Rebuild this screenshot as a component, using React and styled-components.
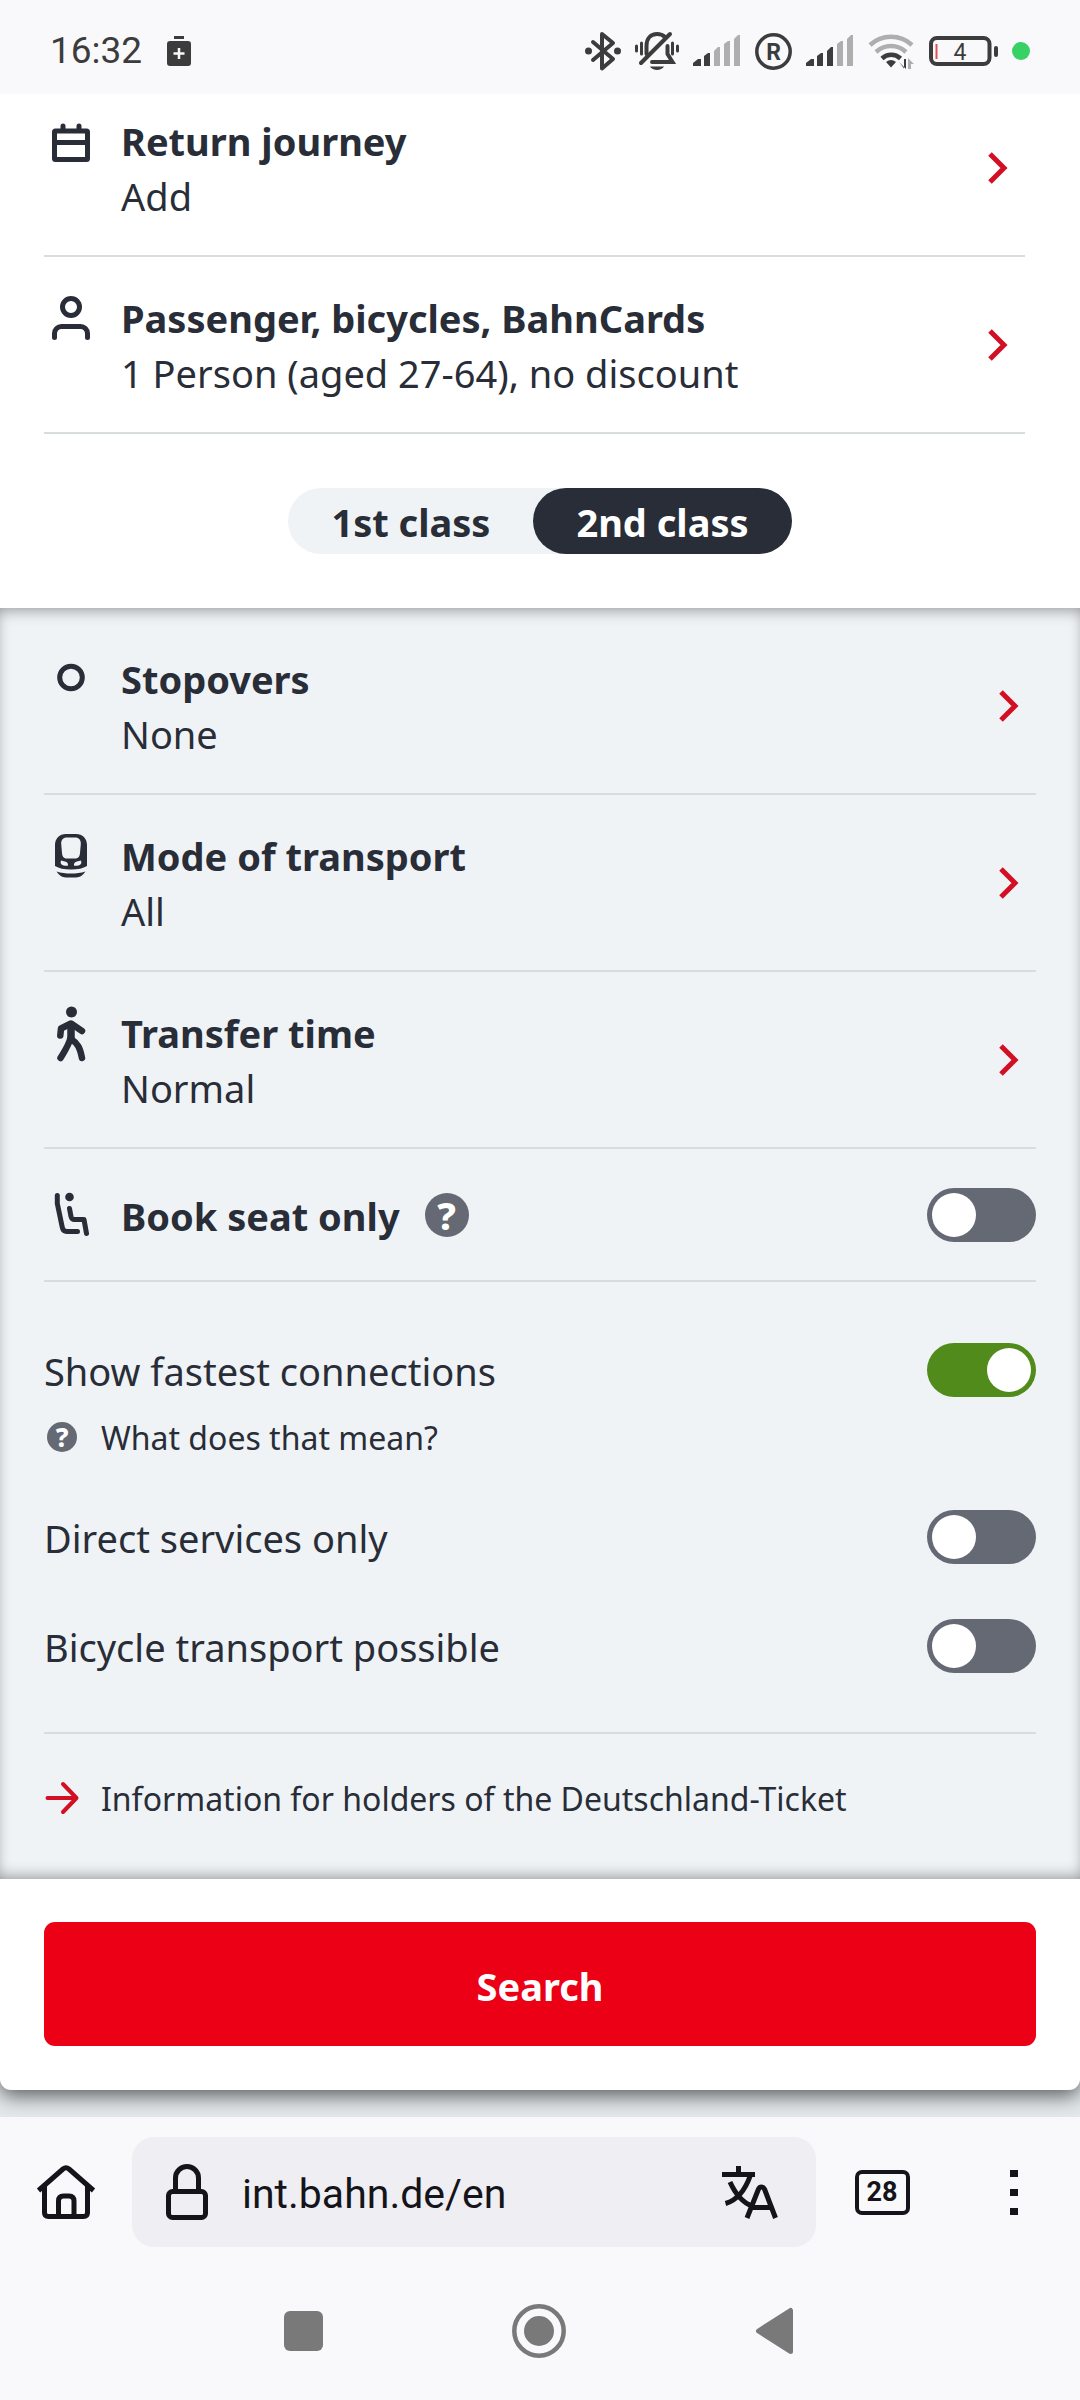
import React, { useState } from "react"
import styled, { createGlobalStyle } from "styled-components"

const GlobalStyle = createGlobalStyle`
    *, *::before, *::after {
        box-sizing: border-box;
    }

    body {
        margin: 0;
        background: #f9f9fb;
        color: #282d37;
        font-family: "Noto Sans", "Open Sans", sans-serif;
        font-size: 38px;
        line-height: 55px;
    }

    button, input {
        font: inherit;
        color: inherit;
    }

    svg {
        display: block;
        flex: none;
        overflow: visible;
    }
`;

// Phone status bar, stays above the shadow of the form card
const StatusBar = styled.header`
    position: relative;
    z-index: 1;
    display: flex;
    align-items: center;
    justify-content: space-between;
    height: 94px;
    padding: 8px 50px 0 50px;
    background: #f9f9fb;
    color: #3c3c3c;
    font-family: Roboto, sans-serif;
    font-size: 37px;
    line-height: 44px;
`;

const StatusGroup = styled.div`
    display: flex;
    align-items: center;
    gap: ${props => props.$gap}px;
`;

// Search form
const Page = styled.main`
    background: #e3e8ea;
    padding-bottom: 27px;
`;

const Form = styled.form`
    background: #fff;
    border-radius: 0 0 11px 11px;
    box-shadow: 0 6px 20px rgba(0, 0, 0, 0.6);
`;

const TopSection = styled.section`
    padding: 0 55px 0 44px;
`;

const OptionsPanel = styled.section`
    padding: 10px 44px 58px;
    background: #eff3f6;
    box-shadow:
        inset 0 12px 16px -10px rgba(0, 0, 0, 0.3),
        inset 0 -12px 16px -10px rgba(0, 0, 0, 0.3),
        inset 0 0 14px rgba(0, 0, 0, 0.12);
`;

const LinkRow = styled.button`
    display: flex;
    align-items: flex-start;
    gap: 23px;
    width: 100%;
    padding: ${props => props.$clipped ? 18 : 32}px 17px 31px 0;
    border: 0;
    border-bottom: 2px solid #d7dcdf;
    background: none;
    text-align: left;
    cursor: pointer;
`;

const RowText = styled.span`
    display: flex;
    flex: 1;
    flex-direction: column;
    padding-top: 2px;
`;

const Title = styled.span`
    font-weight: 700;
`;

const ChevronSlot = styled.span`
    display: flex;
    align-items: center;
    align-self: stretch;
`;

const SeatRow = styled.div`
    display: flex;
    align-items: center;
    gap: 23px;
    height: 133px;
    border-bottom: 2px solid #d7dcdf;
`;

const SeatLabel = styled.div`
    display: flex;
    flex: 1;
    align-items: center;
    gap: 25px;

    label {
        padding-top: 4px;
    }
`;

const ClassBar = styled.div`
    display: flex;
    justify-content: center;
    padding: 54px 0;
    margin-right: -11px;
`;

const ClassSwitch = styled.fieldset`
    display: flex;
    margin: 0;
    padding: 0;
    border: 0;
    border-radius: 33px;
    background: #eff3f6;
`;

const ClassOption = styled.label`
    padding: 7px 43px 4px;
    border-radius: 33px;
    font-weight: 700;
    cursor: pointer;

    &:has(input:checked) {
        background: #282d37;
        color: #fff;
    }

    input {
        appearance: none;
        position: absolute;
        margin: 0;
        opacity: 0;
    }
`;

const Toggle = styled.input.attrs({ type: 'checkbox', role: 'switch' })`
    appearance: none;
    display: flex;
    align-items: center;
    flex: none;
    width: 109px;
    height: 54px;
    margin: 0;
    padding: 0 5px;
    border-radius: 27px;
    background: #646973;
    cursor: pointer;

    &::before {
        content: "";
        width: 44px;
        height: 44px;
        border-radius: 50%;
        background: #fff;
    }

    &:checked {
        justify-content: flex-end;
        background: #508b1b;
    }
`;

const Options = styled.div`
    padding: 60px 0 59px;
    border-bottom: 2px solid #d7dcdf;
`;

const OptionRow = styled.div`
    display: flex;
    align-items: center;
    justify-content: space-between;
    height: 55px;

    & + & {
        margin-top: 54px;
    }

    label {
        padding-top: 4px;
    }
`;

const HelpButton = styled.button`
    display: flex;
    align-items: center;
    gap: 24px;
    margin: 17px 0 49px;
    padding: 0 0 0 3px;
    border: 0;
    background: none;
    font-size: 32px;
    line-height: 44px;
    cursor: pointer;
`;

const SmallText = styled.span`
    padding-top: 2px;
`;

const HelpBadge = styled.span`
    display: flex;
    align-items: center;
    justify-content: center;
    width: ${props => props.$size}px;
    height: ${props => props.$size}px;
    border-radius: 50%;
    background: #646973;
    color: #fff;
    font-size: ${props => props.$size === 44 ? 38 : 26}px;
    font-weight: 800;
    line-height: 1;
`;

const SeatHelp = styled.button`
    padding: 0;
    border: 0;
    background: none;
    cursor: pointer;
`;

const InfoLink = styled.a`
    display: flex;
    align-items: center;
    gap: 23px;
    margin-top: 41px;
    color: inherit;
    font-size: 32px;
    line-height: 44px;
    text-decoration: none;
`;

const SubmitArea = styled.div`
    padding: 43px 44px 44px;
`;

const SubmitButton = styled.button`
    display: block;
    width: 100%;
    height: 124px;
    padding: 4px 0 0;
    border: 0;
    border-radius: 11px;
    background: #ec0016;
    color: #fff;
    font-weight: 700;
    cursor: pointer;
`;

// Browser toolbar and system navigation
const Toolbar = styled.div`
    display: flex;
    align-items: center;
    padding-top: 20px;
    color: #15141a;
`;

const ToolButton = styled.button`
    display: flex;
    justify-content: center;
    width: 132px;
    padding: 0;
    border: 0;
    background: none;
`;

const AddressBar = styled.div`
    display: flex;
    flex: 1;
    align-items: center;
    gap: 34px;
    min-width: 0;
    height: 110px;
    padding: 0 38px 0 34px;
    border-radius: 22px;
    background: #efeff3;
`;

const AddressInput = styled.input`
    flex: 1;
    min-width: 0;
    padding: 4px 0 0;
    border: 0;
    outline: 0;
    background: none;
    font-family: Roboto, sans-serif;
    font-size: 41px;
`;

const IconButton = styled.button`
    padding: 0;
    border: 0;
    background: none;
`;

const TabCount = styled.span`
    display: flex;
    align-items: center;
    justify-content: center;
    width: 55px;
    height: 45px;
    border: 4px solid #15141a;
    border-radius: 7px;
    font-family: Roboto, sans-serif;
    font-size: 27px;
    font-weight: 700;
    line-height: 30px;
`;

const SystemNav = styled.nav`
    display: grid;
    grid-template-columns: repeat(3, 1fr);
    align-items: center;
    height: 152px;
    padding: 16px 188px 0 186px;
    color: #797979;
`;

const NavButton = styled.button`
    display: flex;
    justify-content: center;
    padding: 0;
    border: 0;
    background: none;
    color: inherit;
`;

const RowIcon = ({ children }) => (
    <svg width="54" height="56" viewBox="0 0 54 56" fill="none" stroke="currentColor" strokeWidth="5" strokeLinecap="round" strokeLinejoin="round" aria-hidden="true">
        {children}
    </svg>
)

const CalendarIcon = () => (
    <RowIcon>
        <rect x="10.5" y="19" width="33" height="28.5" rx="1" />
        <path d="M10.5 30.5h33M19 14v4M35 14v4" />
    </RowIcon>
)

const PersonIcon = () => (
    <RowIcon>
        <circle cx="27" cy="18" r="8.5" />
        <path d="M10.5 48.5v-4a7 7 0 0 1 7-7h19a7 7 0 0 1 7 7v4" />
    </RowIcon>
)

const StopoverIcon = () => (
    <RowIcon>
        <circle cx="27" cy="27.500" r="11.3" />
    </RowIcon>
)

const TrainIcon = () => (
    <RowIcon>
        <g fill="currentColor" stroke="none">
            <path fillRule="evenodd" d="M22 7h10c6.500 0 11 4.500 11 11v21c-4 2.500-9 3.500-16 3.500S15 41.500 11 39V18c0-6.500 4.500-11 11-11zM23 10.500c-4 0-6 2.500-5.800 6.500l.8 9c.3 4 2 5.500 5 5.500h8c3 0 4.700-1.500 5-5.500l.8-9c.2-4-1.800-6.500-5.800-6.500zM17 33.500c-1 2.500 0 4.500 2.500 5 2 .4 4 .5 4.500 0 .3-2.500-1-3.500-3-4zM37 33.500c1 2.500 0 4.500-2.500 5-2 .4-4 .5-4.500 0-.3-2.500 1-3.500 3-4z" />
            <path d="M12.500 44.500c9 2.800 20 2.800 29 0-2 3-5.500 6-9.500 6H22c-4 0-7.500-3-9.500-6z" />
        </g>
    </RowIcon>
)

const WalkIcon = () => (
    <RowIcon>
        <circle cx="27.500" cy="8" r="5.500" fill="currentColor" stroke="none" />
        <path d="M16.300 31.500 17 24.500 27 19.500 38 27" strokeWidth="6.500" />
        <path d="M27 21v14" strokeWidth="7.500" />
        <path d="M26.500 34c-2 8-6.500 14-10 20M27 35c7 4.500 9 9 11 19" strokeWidth="6.500" />
    </RowIcon>
)

const SeatIcon = () => (
    <RowIcon>
        <circle cx="25.500" cy="10" r="4.300" fill="currentColor" stroke="none" />
        <path d="M13.300 8.500v8l5 24q.9 4 4.500 4H33.500M25.500 21.500l1.500 8q.7 3 3.500 3h9.500l2.500 14" />
    </RowIcon>
)

const ChevronIcon = () => (
    <svg width="20" height="32" viewBox="0 0 20 32" fill="none" stroke="#d20f23" strokeWidth="5" aria-hidden="true">
        <path d="M2 2l14 14L2 30" />
    </svg>
)

const ArrowIcon = () => (
    <svg width="34" height="34" viewBox="0 0 34 34" fill="none" stroke="#d20f23" strokeWidth="4" strokeLinecap="round" strokeLinejoin="round" aria-hidden="true">
        <path d="M3.500 17H32M19 3l13.500 14L19 31" />
    </svg>
)

const SaverIcon = () => (
    <svg width="24" height="30" viewBox="0 0 24 30" fill="currentColor" aria-hidden="true">
        <path d="M7 0h10v3H7zM3 5h18q3 0 3 3v19q0 3-3 3H3q-3 0-3-3V8q0-3 3-3z" />
        <path d="M12 12v11M6.500 17.500h11" stroke="#f9f9fb" strokeWidth="2.500" />
    </svg>
)

const BluetoothIcon = () => (
    <svg width="36" height="40" viewBox="0 0 36 40" fill="none" stroke="currentColor" strokeWidth="4" strokeLinejoin="round" strokeLinecap="round" aria-hidden="true">
        <path d="M8 11l20 17-11 9.500V3L28 12 8 29" />
        <circle cx="3.500" cy="20" r="3.500" fill="currentColor" stroke="none" />
        <circle cx="32.500" cy="20" r="3.500" fill="currentColor" stroke="none" />
    </svg>
)

const MutedBellIcon = () => (
    <svg width="44" height="38" viewBox="0 0 44 38" fill="none" stroke="currentColor" strokeWidth="4" strokeLinecap="round" aria-hidden="true">
        <path d="M11.500 22V14C11.500 6 16 2 22 2q5 0 8 3" />
        <path d="M32.500 14v8l5 8H17" />
        <path d="M35 2 6 31" />
        <path d="M15 34.500h14c-2.500 4.500-11.500 4.500-14 0z" fill="currentColor" stroke="none" />
        <path d="M6.500 11v11M1.500 14v5M37.500 11v11M42.500 14v5" strokeWidth="3" />
    </svg>
)

const BARS = [
    'M0 28l5-4h3v7H0z',
    'M11 21l4-3h2v13h-6z',
    'M21 16l4-4h2v19h-6z',
    'M31 9l4-3h2v25h-6z',
    'M41 4l4-4h2v31h-6z',
]

const SignalIcon = ({ level }) => (
    <svg width="48" height="32" viewBox="0 0 48 32" aria-hidden="true">
        {BARS.map((d, index) => (
            <path key={d} d={d} fill={index < level ? '#3c3c3c' : '#aeaeae'} />
        ))}
    </svg>
)

const RoamingIcon = () => (
    <svg width="37" height="37" viewBox="0 0 37 37" fill="none" stroke="currentColor" aria-hidden="true">
        <circle cx="18.500" cy="18.500" r="16.700" strokeWidth="3.500" />
        <text x="18.500" y="26.500" textAnchor="middle" fontFamily="Roboto, sans-serif" fontSize="23" fontWeight="700" fill="currentColor" stroke="none">R</text>
    </svg>
)

const WifiIcon = () => (
    <svg width="47" height="36" viewBox="0 0 47 36" fill="none" strokeWidth="4.500" aria-hidden="true">
        <path d="M2 12a31 31 0 0 1 42 0M8 19a22 22 0 0 1 30 0" stroke="#aeaeae" />
        <path d="M14 25.500a13.500 13.500 0 0 1 18.500 0" stroke="currentColor" />
        <path d="M18 29q5-4 10 0l-5 5.500z" fill="currentColor" />
        <path d="M31 29l5 6.500V26h2v10" fill="currentColor" />
        <path d="M40 36V25l6 6h-3v5z" fill="#aeaeae" />
    </svg>
)

const BatteryIcon = () => (
    <svg width="69" height="30" viewBox="0 0 69 30" fill="none" stroke="currentColor" aria-hidden="true">
        <rect x="2" y="2" width="58.500" height="26" rx="6" strokeWidth="4" />
        <path d="M7.500 8v15" stroke="#e05050" strokeWidth="2" />
        <path d="M67 12v7" strokeWidth="4" strokeLinecap="round" />
        <text x="31" y="23.500" textAnchor="middle" fontFamily="Roboto, sans-serif" fontSize="23" fill="currentColor" stroke="none">4</text>
    </svg>
)

const RecordingDot = styled.span`
    width: 18px;
    height: 18px;
    border-radius: 50%;
    background: #38d166;
`;

const HomeIcon = () => (
    <svg width="58" height="54" viewBox="0 0 58 54" fill="none" stroke="currentColor" strokeWidth="5" strokeLinejoin="round" aria-hidden="true">
        <path d="M1.500 25.500 26 4q3-2.500 6 0l24.500 21.500" />
        <path d="M7.500 21v26.500q0 4 4 4h35q4 0 4-4V21" />
        <path d="M21.500 51V36q0-5 5-5h5.500q5 0 5 5v15" />
    </svg>
)

const LockIcon = () => (
    <svg width="42" height="56" viewBox="0 0 42 56" fill="none" stroke="currentColor" strokeWidth="5" aria-hidden="true">
        <rect x="2.500" y="27.500" width="37" height="26" rx="4" />
        <path d="M9.500 27V14a11.500 11.500 0 0 1 23 0v13" />
    </svg>
)

const TranslateIcon = () => (
    <svg width="56" height="53" viewBox="0 0 56 53" fill="none" stroke="currentColor" strokeWidth="5" aria-hidden="true">
        <path d="M0 8.500h33M16.500 0v8M28.500 9C24 22 16 34 3.500 37.500M8 16c5 11 11 20 22 24" />
        <path d="M25 52l11.500-29q1-2 3-2t3 2L53.500 52M30 41.500h20" />
    </svg>
)

const MenuIcon = () => (
    <svg width="8" height="45" viewBox="0 0 8 45" fill="currentColor" aria-hidden="true">
        <path d="M0 0h8v7H0zM0 19h8v7H0zM0 38h8v7H0z" />
    </svg>
)

const RecentsIcon = () => (
    <svg width="39" height="40" viewBox="0 0 39 40" fill="currentColor" aria-hidden="true">
        <rect width="39" height="40" rx="6" />
    </svg>
)

const HomeCircleIcon = () => (
    <svg width="54" height="54" viewBox="0 0 54 54" fill="none" stroke="currentColor" aria-hidden="true">
        <circle cx="27" cy="27" r="24.700" strokeWidth="4.500" />
        <circle cx="27" cy="27" r="15" fill="currentColor" stroke="none" />
    </svg>
)

const BackIcon = () => (
    <svg width="37" height="46" viewBox="0 0 37 46" fill="currentColor" stroke="currentColor" strokeWidth="5" strokeLinejoin="round" aria-hidden="true">
        <path d="M2.500 23 34.500 2.500v41z" />
    </svg>
)

function NavigationRow({ icon, title, value, clipped }) {
    return (
        <LinkRow type="button" $clipped={clipped}>
            {icon}
            <RowText>
                <Title>{title}</Title>
                <span>{value}</span>
            </RowText>
            <ChevronSlot><ChevronIcon /></ChevronSlot>
        </LinkRow>
    )
}

function SwitchRow({ id, label, checked, onChange }) {
    return (
        <OptionRow>
            <label htmlFor={id}>{label}</label>
            <Toggle id={id} checked={checked} onChange={onChange} />
        </OptionRow>
    )
}

export default function App() {
    const [travelClass, setTravelClass] = useState('2nd class')
    const [url, setUrl] = useState('int.bahn.de/en')
    const [settings, setSettings] = useState({ seat: false, fastest: true, direct: false, bicycle: false })

    const toggle = (name) => () => setSettings({ ...settings, [name]: !settings[name] })

    return (
        <>
            <GlobalStyle />
            <StatusBar>
                <StatusGroup $gap={25}>
                    <span>16:32</span>
                    <SaverIcon />
                </StatusGroup>
                <StatusGroup $gap={14}>
                    <BluetoothIcon />
                    <MutedBellIcon />
                    <SignalIcon level={2} />
                    <RoamingIcon />
                    <SignalIcon level={3} />
                    <WifiIcon />
                    <BatteryIcon />
                    <RecordingDot />
                </StatusGroup>
            </StatusBar>

            <Page>
                <Form onSubmit={(event) => event.preventDefault()}>
                    <TopSection>
                        <NavigationRow clipped icon={<CalendarIcon />} title="Return journey" value="Add" />
                        <NavigationRow icon={<PersonIcon />} title="Passenger, bicycles, BahnCards" value="1 Person (aged 27-64), no discount" />
                        <ClassBar>
                            <ClassSwitch aria-label="Travel class">
                                {['1st class', '2nd class'].map((name) => (
                                    <ClassOption key={name}>
                                        <input type="radio" name="class" checked={travelClass === name} onChange={() => setTravelClass(name)} />
                                        {name}
                                    </ClassOption>
                                ))}
                            </ClassSwitch>
                        </ClassBar>
                    </TopSection>

                    <OptionsPanel>
                        <NavigationRow icon={<StopoverIcon />} title="Stopovers" value="None" />
                        <NavigationRow icon={<TrainIcon />} title="Mode of transport" value="All" />
                        <NavigationRow icon={<WalkIcon />} title="Transfer time" value="Normal" />
                        <SeatRow>
                            <SeatIcon />
                            <SeatLabel>
                                <Title as="label" htmlFor="seat">Book seat only</Title>
                                <SeatHelp type="button" aria-label="About seat booking"><HelpBadge $size={44}>?</HelpBadge></SeatHelp>
                            </SeatLabel>
                            <Toggle id="seat" checked={settings.seat} onChange={toggle('seat')} />
                        </SeatRow>
                        <Options>
                            <SwitchRow id="fastest" label="Show fastest connections" checked={settings.fastest} onChange={toggle('fastest')} />
                            <HelpButton type="button">
                                <HelpBadge $size={30}>?</HelpBadge>
                                <SmallText>What does that mean?</SmallText>
                            </HelpButton>
                            <SwitchRow id="direct" label="Direct services only" checked={settings.direct} onChange={toggle('direct')} />
                            <SwitchRow id="bicycle" label="Bicycle transport possible" checked={settings.bicycle} onChange={toggle('bicycle')} />
                        </Options>
                        <InfoLink href="#deutschland-ticket">
                            <ArrowIcon />
                            <SmallText>Information for holders of the Deutschland-Ticket</SmallText>
                        </InfoLink>
                    </OptionsPanel>

                    <SubmitArea>
                        <SubmitButton type="submit">Search</SubmitButton>
                    </SubmitArea>
                </Form>
            </Page>

            <Toolbar>
                <ToolButton type="button" aria-label="Home"><HomeIcon /></ToolButton>
                <AddressBar>
                    <LockIcon />
                    <AddressInput type="text" aria-label="Address" value={url} onChange={(event) => setUrl(event.target.value)} />
                    <IconButton type="button" aria-label="Translate"><TranslateIcon /></IconButton>
                </AddressBar>
                <ToolButton type="button" aria-label="Tabs"><TabCount>28</TabCount></ToolButton>
                <ToolButton type="button" aria-label="Menu"><MenuIcon /></ToolButton>
            </Toolbar>
            <SystemNav aria-label="System">
                <NavButton type="button" aria-label="Recent apps"><RecentsIcon /></NavButton>
                <NavButton type="button" aria-label="Home screen"><HomeCircleIcon /></NavButton>
                <NavButton type="button" aria-label="Back"><BackIcon /></NavButton>
            </SystemNav>
        </>
    )
}
